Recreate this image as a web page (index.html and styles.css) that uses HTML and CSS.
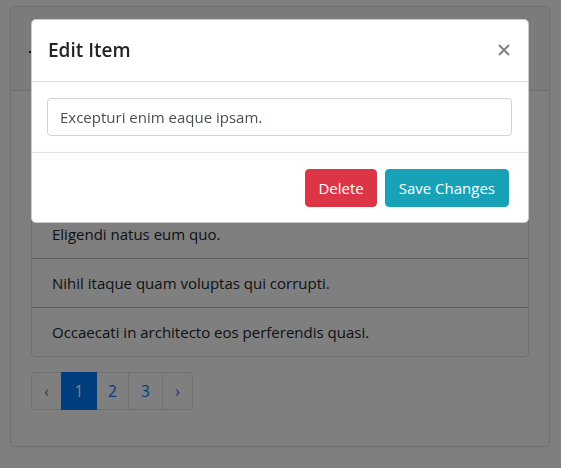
FILE: index.html
```html
<!DOCTYPE html>
<html lang="en">
<head>
<meta charset="utf-8">
<title>Edit Item</title>
<link rel="stylesheet" href="styles.css">
</head>
<body>
<div class="page">
  <div class="card">
    <div class="card-header"><span class="mark"></span></div>
    <div class="card-body">
      <ul class="list-group">
        <li class="list-group-item">Excepturi enim eaque ipsam.</li>
        <li class="list-group-item">Voluptatem sed quia dolores.</li>
        <li class="list-group-item">Eligendi natus eum quo.</li>
        <li class="list-group-item">Nihil itaque quam voluptas qui corrupti.</li>
        <li class="list-group-item">Occaecati in architecto eos perferendis quasi.</li>
      </ul>
      <ul class="pagination">
        <li class="page-item w-prev"><span class="page-link muted">&lsaquo;</span></li>
        <li class="page-item w-1 active"><span class="page-link">1</span></li>
        <li class="page-item w-2"><span class="page-link">2</span></li>
        <li class="page-item w-3"><span class="page-link">3</span></li>
        <li class="page-item w-next"><span class="page-link">&rsaquo;</span></li>
      </ul>
    </div>
  </div>
</div>
<div class="backdrop"></div>
<div class="modal">
  <div class="modal-header">
    <h5 class="modal-title">Edit Item</h5>
    <button class="close" type="button" aria-label="Close">
      <svg width="12" height="12" viewBox="0 0 12 12"><path d="M1 1L11 11M11 1L1 11" stroke="#000" stroke-width="1.9" stroke-linecap="butt"/></svg>
    </button>
  </div>
  <div class="modal-body">
    <input class="form-control" type="text" value="Excepturi enim eaque ipsam.">
  </div>
  <div class="modal-footer">
    <button class="btn btn-danger" type="button">Delete</button>
    <button class="btn btn-info" type="button">Save Changes</button>
  </div>
</div>
</body>
</html>
```
FILE: styles.css
```css
* { box-sizing: border-box; }
html, body { margin: 0; padding: 0; background: #fff; }
body {
  font-family: "Open Sans", "Noto Sans", sans-serif;
  font-size: 15px;
  line-height: 24px;
  color: #212529;
  width: 561px;
  height: 468px;
  overflow: hidden;
  position: relative;
}
.page { padding: 6px 11px 0 10px; }
.card {
  border: 1px solid rgba(0,0,0,.125);
  border-radius: 4px;
  background: #fff;
}
.card-header {
  height: 84px;
  background: rgba(0,0,0,.03);
  border-bottom: 1px solid rgba(0,0,0,.125);
  padding: 44px 0 0 18px;
}
.mark { display: block; width: 3px; height: 2px; background: #212529; }
.card-body { padding: 20px; }
.list-group { list-style: none; margin: 0; padding: 0; }
.list-group-item {
  border: 1px solid rgba(0,0,0,.125);
  padding: 12px 20px;
  height: 50px;
  margin-top: -1px;
}
.list-group-item:first-child { margin-top: 0; border-radius: 4px 4px 0 0; }
.list-group-item:last-child { border-radius: 0 0 4px 4px; }
.pagination {
  list-style: none; margin: 15px 0 16px 0; padding: 0;
  display: flex;
}
.page-item { margin-left: -1px; position: relative; z-index: 0; }
.page-item:first-child { margin-left: 0; }
.page-link {
  display: flex; align-items: center; justify-content: center;
  height: 38px;
  border: 1px solid #dee2e6;
  color: #007bff;
  background: #fff;
  font-size: 15.5px;
}
.page-link.muted { color: #6c757d; }
.page-item:first-child .page-link { border-radius: 4px 0 0 4px; }
.page-item:last-child .page-link { border-radius: 0 4px 4px 0; }
.w-prev .page-link { width: 31px; }
.w-1 .page-link { width: 36px; }
.w-2 .page-link { width: 33px; }
.w-3 .page-link { width: 35px; }
.w-next .page-link { width: 31px; }
.active { z-index: 1; }
.active .page-link { background: #007bff; border-color: #007bff; color: #fff; }

.backdrop {
  position: fixed; left: 0; top: 0; width: 100%; height: 100%;
  background: #000;
  opacity: .5;
  z-index: 1040;
}
.modal {
  position: absolute;
  z-index: 1050;
  left: 31px; top: 19px; width: 498px;
  background: #fff;
  border: 1px solid rgba(0,0,0,.2);
  border-radius: 5px;
}
.modal-header {
  display: flex; align-items: center; justify-content: space-between;
  padding: 15px 16px 16px 16px;
  border-bottom: 1px solid #dee2e6;
}
.modal-title {
  margin: 0;
  font-size: 19px;
  font-weight: 600;
  line-height: 30px;
  color: #212529;
}
.close {
  border: 0; background: transparent; padding: 0; margin: 0 2px 0 0;
  opacity: .5; display: flex; cursor: pointer;
}
.modal-body { padding: 16px 16px 16px 15px; }
.form-control {
  display: block; width: 100%;
  height: 38px;
  padding: 6px 12px;
  font-family: inherit; font-size: 15px; line-height: 24px;
  color: #495057;
  background: #fff;
  border: 1px solid #ced4da;
  border-radius: 4px;
}
.modal-footer {
  display: flex; justify-content: flex-end; gap: 8px;
  padding: 16px 19px 15px 16px;
  border-top: 1px solid #dee2e6;
}
.btn {
  height: 38px;
  padding: 6px 12px;
  font-family: inherit; font-size: 15px; line-height: 24px;
  border: 1px solid transparent;
  border-radius: 4px;
  color: #fff;
}
.btn-danger { background: #dc3545; border-color: #dc3545; }
.btn-info { background: #17a2b8; border-color: #17a2b8; padding: 6px 13px; }
```
